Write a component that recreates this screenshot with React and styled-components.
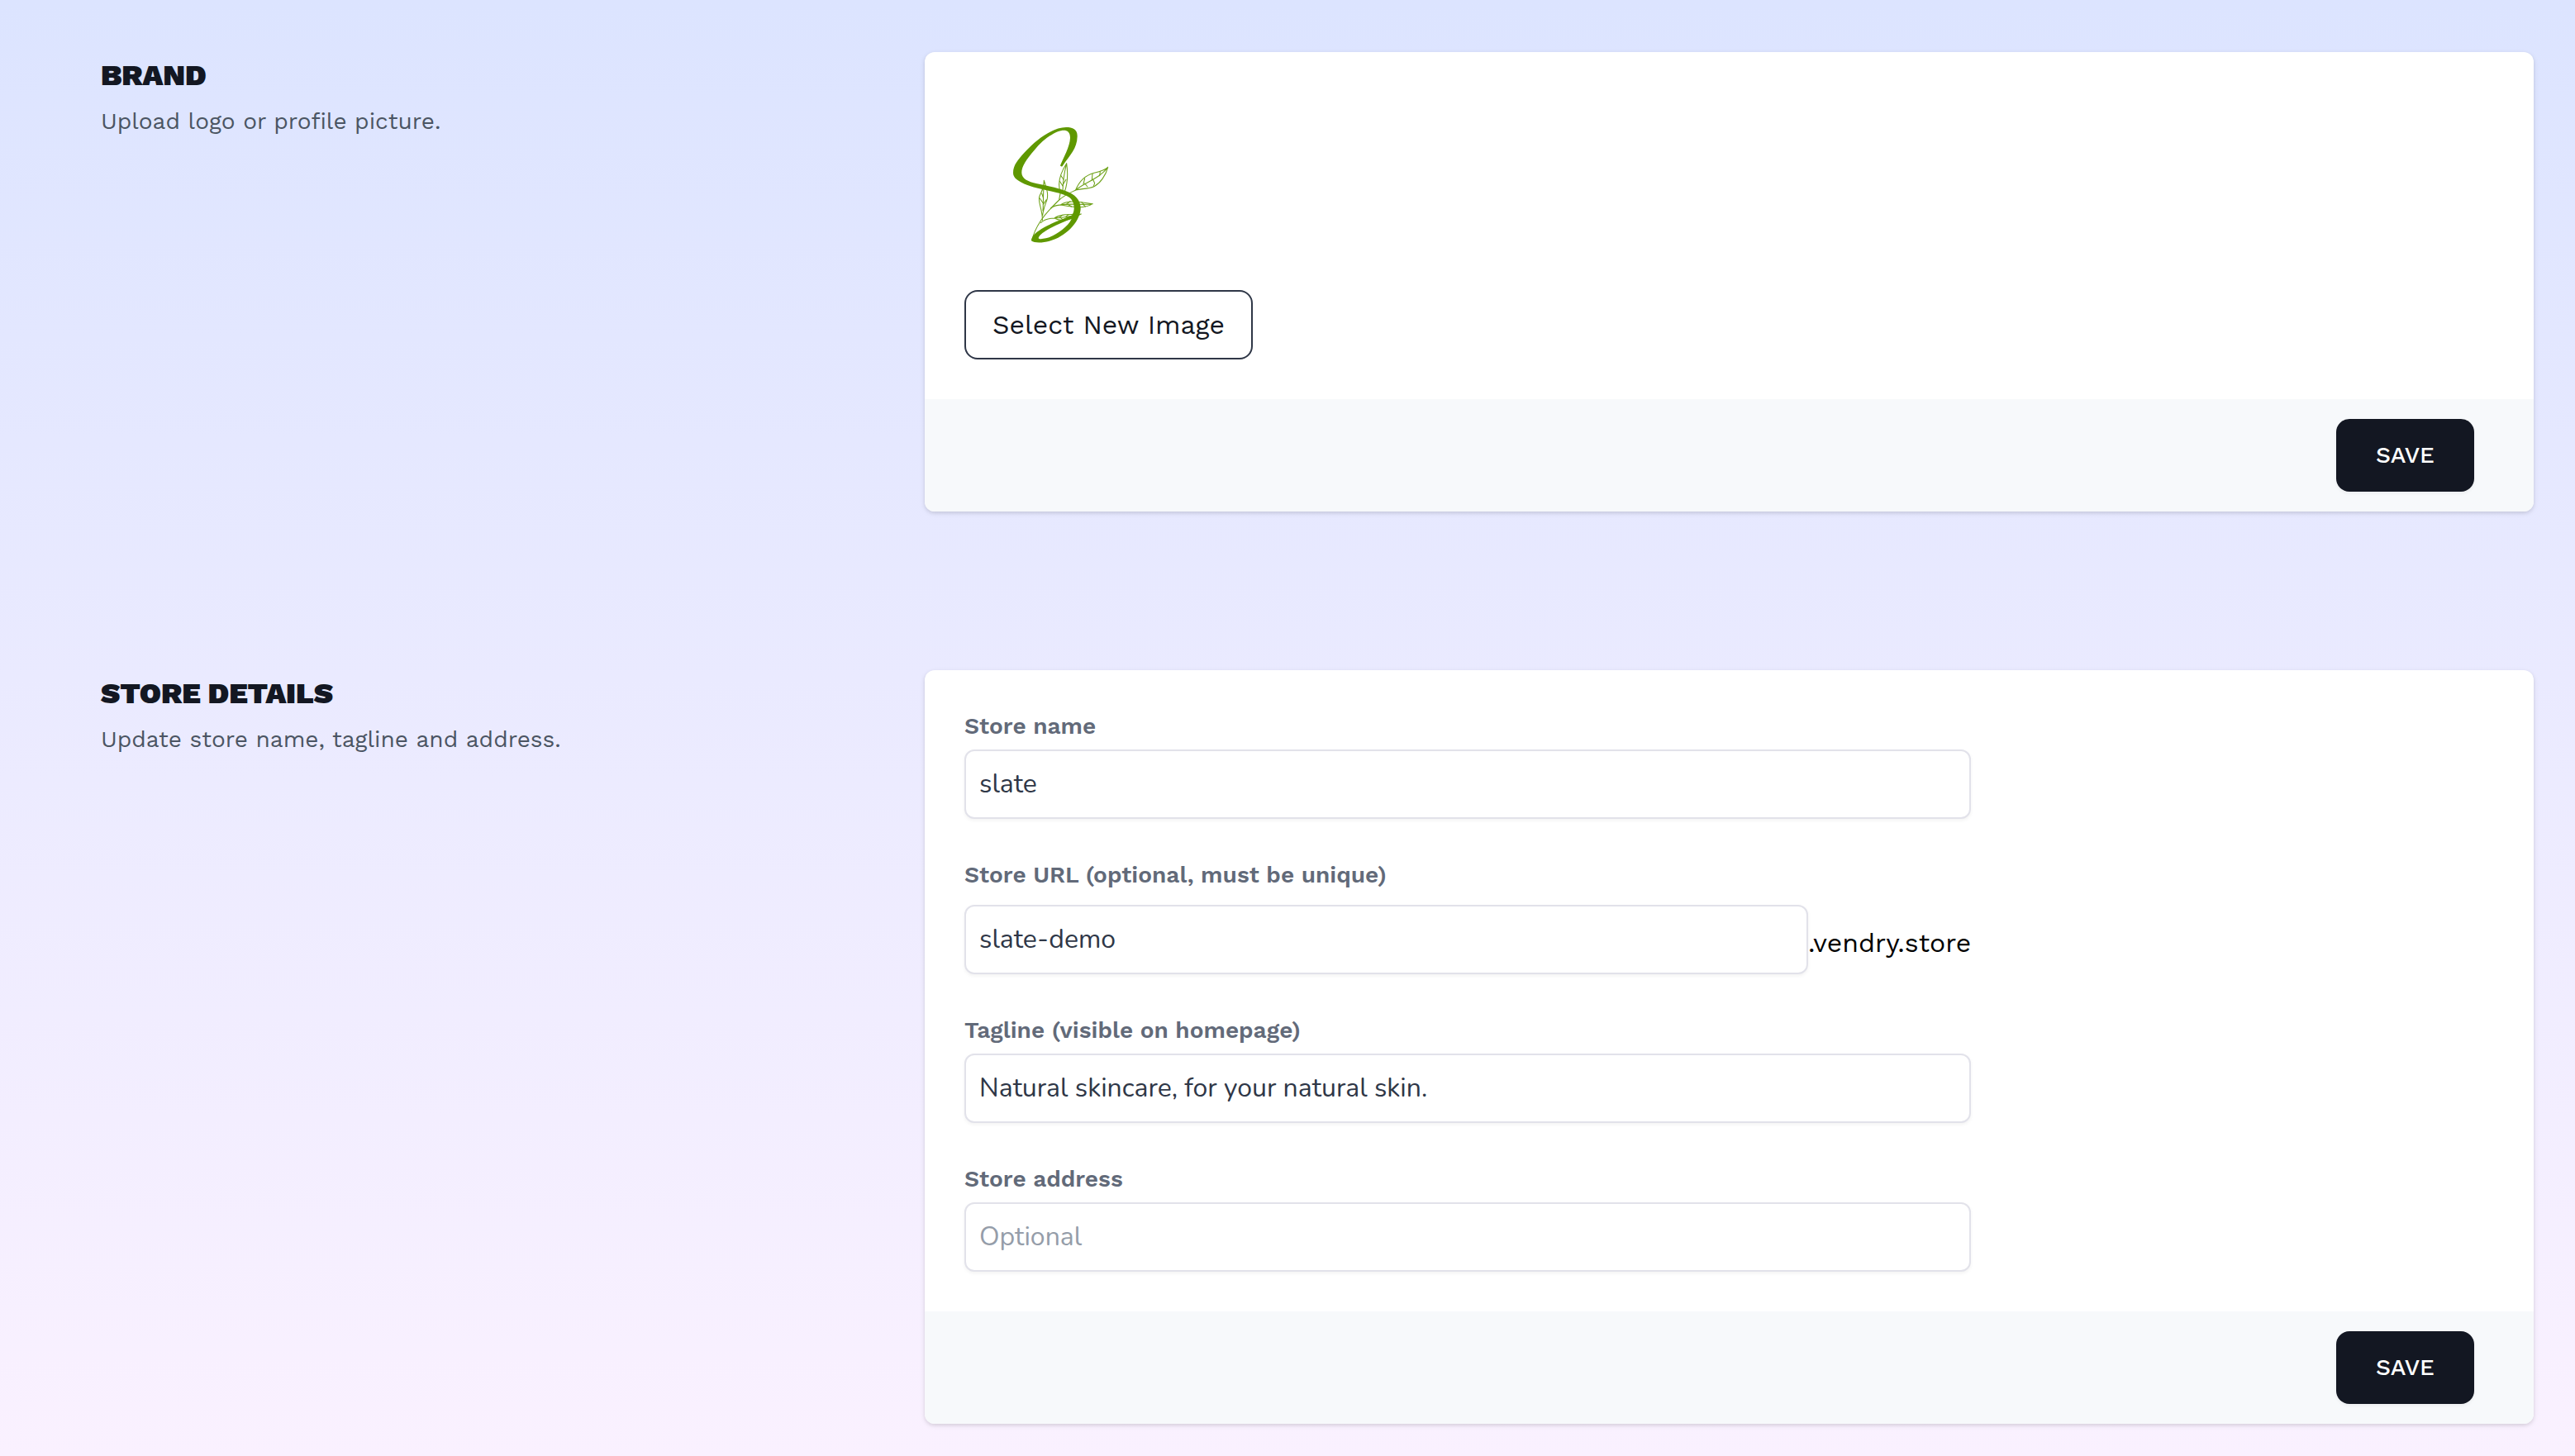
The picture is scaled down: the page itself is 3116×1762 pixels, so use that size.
import React from 'react';
import styled, { createGlobalStyle } from 'styled-components';

const GlobalStyle = createGlobalStyle`
*{
box-sizing:border-box;
}
body{
margin:0;
font-family:'Work Sans', Inter, 'Liberation Sans', sans-serif;
-webkit-font-smoothing:antialiased;
}
`;
const Page = styled.main`
width:100%;
min-height:1762px;
padding:63px 50px 39px 122px;
display:flex;
flex-direction:column;
gap:192px;
background:linear-gradient(180deg,#dce4ff 0%,#faf1ff 100%);
`;
const Section = styled.section`
display:grid;
grid-template-columns:1fr 1947px;
`;
const Intro = styled.div`
padding-top:4px;
`;
const Title = styled.h3`
margin:0;
font-size:36px;
font-weight:900;
line-height:48px;
letter-spacing:-0.1px;
text-transform:uppercase;
color:#131722;
`;
const Description = styled.p`
margin:12px 0 0;
font-size:28px;
line-height:40px;
color:#4b5563;
`;
const Card = styled.div`
border-radius:12px;
overflow:hidden;
background-color:#fff;
box-shadow:0 2px 6px rgba(0,0,0,0.1), 0 2px 4px rgba(0,0,0,0.06);
`;
const CardBody = styled.div`
padding:48px;
display:flex;
flex-direction:column;
align-items:flex-start;
gap:${props => props.$gap || 48}px;
`;
const CardFooter = styled.div`
height:136px;
padding:0 72px;
display:flex;
align-items:center;
justify-content:flex-end;
background-color:#f7f9fb;
`;
const SaveButton = styled.button`
width:167px;
height:88px;
padding:0 0 2px;
border:none;
border-radius:16px;
background-color:#131722;
color:#fff;
font-family:inherit;
font-size:28px;
font-weight:500;
cursor:pointer;
box-shadow:0 2px 4px rgba(0,0,0,0.05);
`;
const SelectButton = styled.button`
width:349px;
height:84px;
padding:0;
border:2px solid #2f3747;
border-radius:16px;
background-color:#fff;
color:#131722;
font-family:inherit;
font-size:32px;
cursor:pointer;
`;
const Logo = styled.svg`
width:224px;
height:224px;
display:block;
`;
const Field = styled.div`
width:1218px;
display:flex;
flex-direction:column;
gap:${props => props.$gap || 8}px;
`;
const Label = styled.label`
font-size:28px;
font-weight:600;
line-height:40px;
color:#626a79;
`;
const InputRow = styled.div`
display:flex;
align-items:center;
`;
const Input = styled.input`
flex:1;
width:100%;
min-width:0;
min-height:84px;
padding:0 16px 2px;
border:2px solid #e2e2ea;
border-radius:12px;
outline:none;
background-color:#fff;
color:#2f3747;
font-family:Nunito, Lato, 'Open Sans', sans-serif;
font-size:32px;
box-shadow:0 2px 4px rgba(0,0,0,0.05);
&::placeholder{
color:#959da9;
opacity:1;
}
`;
const Suffix = styled.span`
width:197px;
padding-top:8px;
white-space:nowrap;
font-size:32px;
line-height:48px;
color:#000;
`;

const BrandLogo = () => (
  <Logo viewBox="-99 -57 672 672" fill="none">
    <g stroke="#5f9800" strokeWidth="3.2" strokeLinecap="round" strokeLinejoin="round" opacity="0.9">
      <path d="M147 482C152 455 163 435 178 412C195 385 215 365 245 336C265 318 285 310 305 300"/>
      {/* top right leaf */}
      <path d="M305 300C318 268 342 246 372 238C400 231 413 226 422 217C414 248 394 275 372 287C350 296 325 295 305 300C340 271 390 260 422 217"/>
      <path d="M333 278L338 258M338 276L348 288M364 264L366 241M368 262L374 275L370 286M392 248L394 233"/>
      {/* middle leaf */}
      <path d="M250 308C240 282 243 248 272 203C277 238 276 275 265 306M258 308C258 270 264 235 272 203M250 308L245 334"/>
      <path d="M258 285L247 268M259 280L270 262M261 262L252 248"/>
      {/* left leaf */}
      <path d="M184 410C187 380 168 345 173 325C177 308 191 300 190 265C198 290 208 315 200 338C192 358 187 372 185 392M186 375C188 345 187 310 190 265"/>
      <path d="M187 348L175 330M187 352L199 335M188 330L182 312"/>
      {/* right small leaf */}
      <path d="M215 366C228 354 240 355 250 354C275 335 318 343 367 350C335 370 290 361 250 354C290 347 330 356 367 350"/>
      <path d="M272 351L285 341M275 351L290 360M335 352L326 344M332 352L340 360"/>
      {/* lower leaf */}
      <path d="M178 419C195 403 215 402 228 402C250 386 285 389 325 387C292 402 260 420 228 402C255 400 290 396 325 387"/>
      <path d="M245 401L256 391M250 401L262 410M268 398L278 390M272 398L285 402"/>
    </g>
    <path
      fill="#5f9800"
      fillRule="evenodd"
      d="M249 211C260 184 284 142 285 110C285 90 275 83 262 83C235 83 190 112 155 155C125 190 108 215 109 238C110 258 130 270 165 277C205 285 245 293 270 304C300 314 323 335 323 366C323 412 270 470 210 485C185 492 155 493 144 484C143 468 165 450 190 436C225 416 262 405 292 391C302 375 301 352 292 338C284 322 262 316 235 309C195 299 150 291 120 278C95 267 78 256 78 238C78 210 95 190 120 163C165 112 225 72 270 72C295 72 312 80 311 106C310 150 285 172 257 213C254 216 250 214 249 211ZM170 473C175 462 190 451 212 439C240 424 268 412 290 405C275 436 232 466 197 475C183 478 170 479 170 473Z"
    />
  </Logo>
);

const App = () => {
  return (
    <>
      <GlobalStyle/>
      <Page>
        <Section>
          <Intro>
            <Title>Brand</Title>
            <Description>Upload logo or profile picture.</Description>
          </Intro>
          <Card>
            <CardBody $gap={16}>
              <BrandLogo/>
              <SelectButton>Select New Image</SelectButton>
            </CardBody>
            <CardFooter>
              <SaveButton>SAVE</SaveButton>
            </CardFooter>
          </Card>
        </Section>
        <Section>
          <Intro>
            <Title>Store details</Title>
            <Description>Update store name, tagline and address.</Description>
          </Intro>
          <Card>
            <CardBody>
              <Field>
                <Label htmlFor="name">Store name</Label>
                <Input id="name" defaultValue="slate"/>
              </Field>
              <Field $gap={16}>
                <Label htmlFor="url">Store URL (optional, must be unique)</Label>
                <InputRow>
                  <Input id="url" defaultValue="slate-demo"/>
                  <Suffix>.vendry.store</Suffix>
                </InputRow>
              </Field>
              <Field>
                <Label htmlFor="tagline">Tagline (visible on homepage)</Label>
                <Input id="tagline" defaultValue="Natural skincare, for your natural skin."/>
              </Field>
              <Field>
                <Label htmlFor="address">Store address</Label>
                <Input id="address" placeholder="Optional"/>
              </Field>
            </CardBody>
            <CardFooter>
              <SaveButton>SAVE</SaveButton>
            </CardFooter>
          </Card>
        </Section>
      </Page>
    </>
  );
};

export default App;
